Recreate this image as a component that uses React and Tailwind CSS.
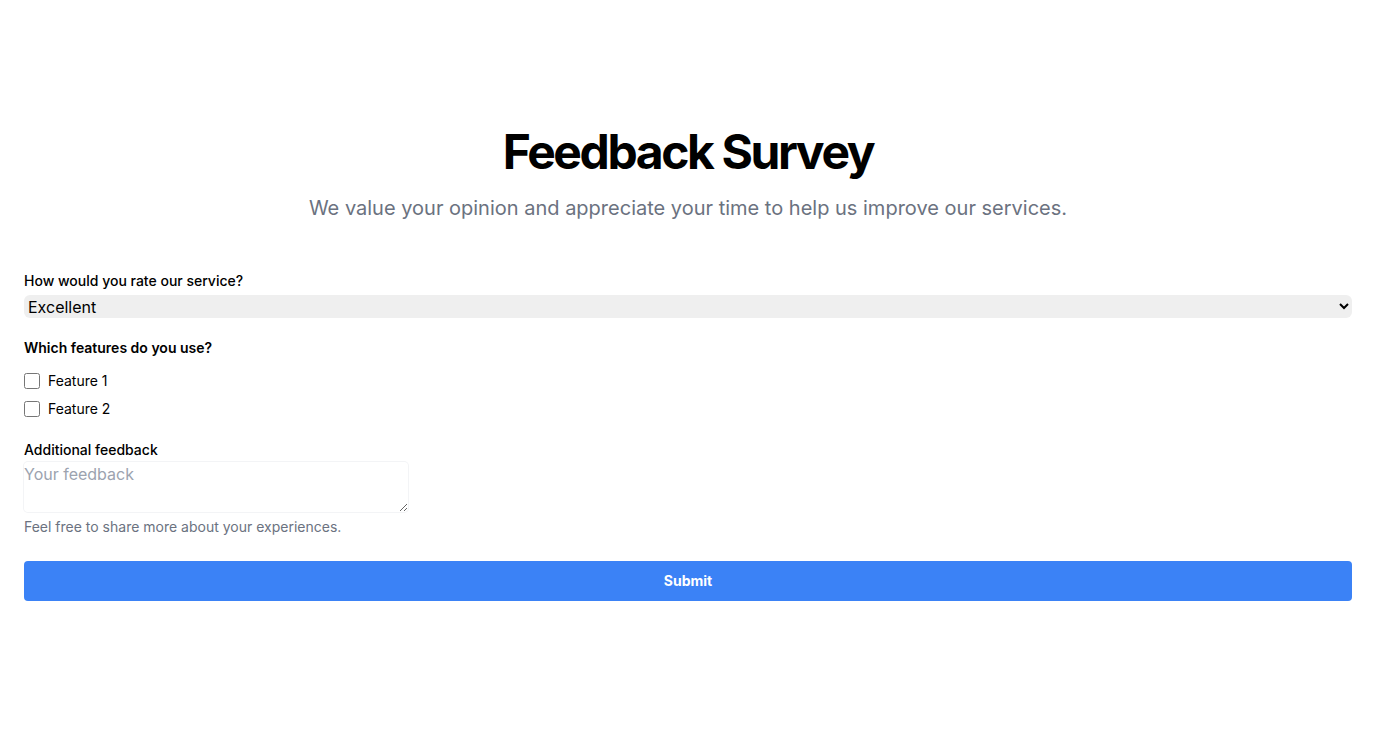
import React from 'react'

function App() {
  return (
    <div className="flex min-h-screen flex-col justify-center bg-white px-6 font-['Inter',sans-serif] text-black">
      <div className="text-center">
        <h1 className="text-5xl font-bold tracking-tighter">Feedback Survey</h1>
        <p className="mt-[18px] text-xl text-[#6b7280]">We value your opinion and appreciate your time to help us improve our services.</p>
      </div>

      <form className="mt-[49px]" onSubmit={(e) => e.preventDefault()}>
        <label className="block text-sm font-medium" htmlFor="rating">How would you rate our service?</label>
        <select
          id="rating"
          defaultValue="excellent"
          className="mt-1 block h-[23px] w-full rounded-md bg-[#efefef] text-base"
        >
          <option value="excellent">Excellent</option>
          <option value="good">Good</option>
          <option value="fair">Fair</option>
          <option value="poor">Poor</option>
        </select>

        <p className="mt-5 text-sm font-semibold">Which features do you use?</p>
        <div className="mt-[13px] flex flex-col gap-2">
          <label className="flex items-center gap-2 text-sm">
            <input type="checkbox" className="h-4 w-4" />
            Feature 1
          </label>
          <label className="flex items-center gap-2 text-sm">
            <input type="checkbox" className="h-4 w-4" />
            Feature 2
          </label>
        </div>

        <label className="mt-[21px] block text-sm font-medium" htmlFor="feedback">Additional feedback</label>
        <textarea
          id="feedback"
          placeholder="Your feedback"
          className="mt-0.5 block h-[50px] w-96 rounded border-0 text-base ring-1 ring-[#f3f4f6] placeholder:text-[#9ca3af]"
        />
        <p className="mt-[5px] text-sm text-[#6b7280]">Feel free to share more about your experiences.</p>

        <button type="submit" className="mt-6 h-10 w-full rounded bg-[#3b82f6] text-sm font-bold text-white">
          Submit
        </button>
      </form>
    </div>
  )
}

export default App
